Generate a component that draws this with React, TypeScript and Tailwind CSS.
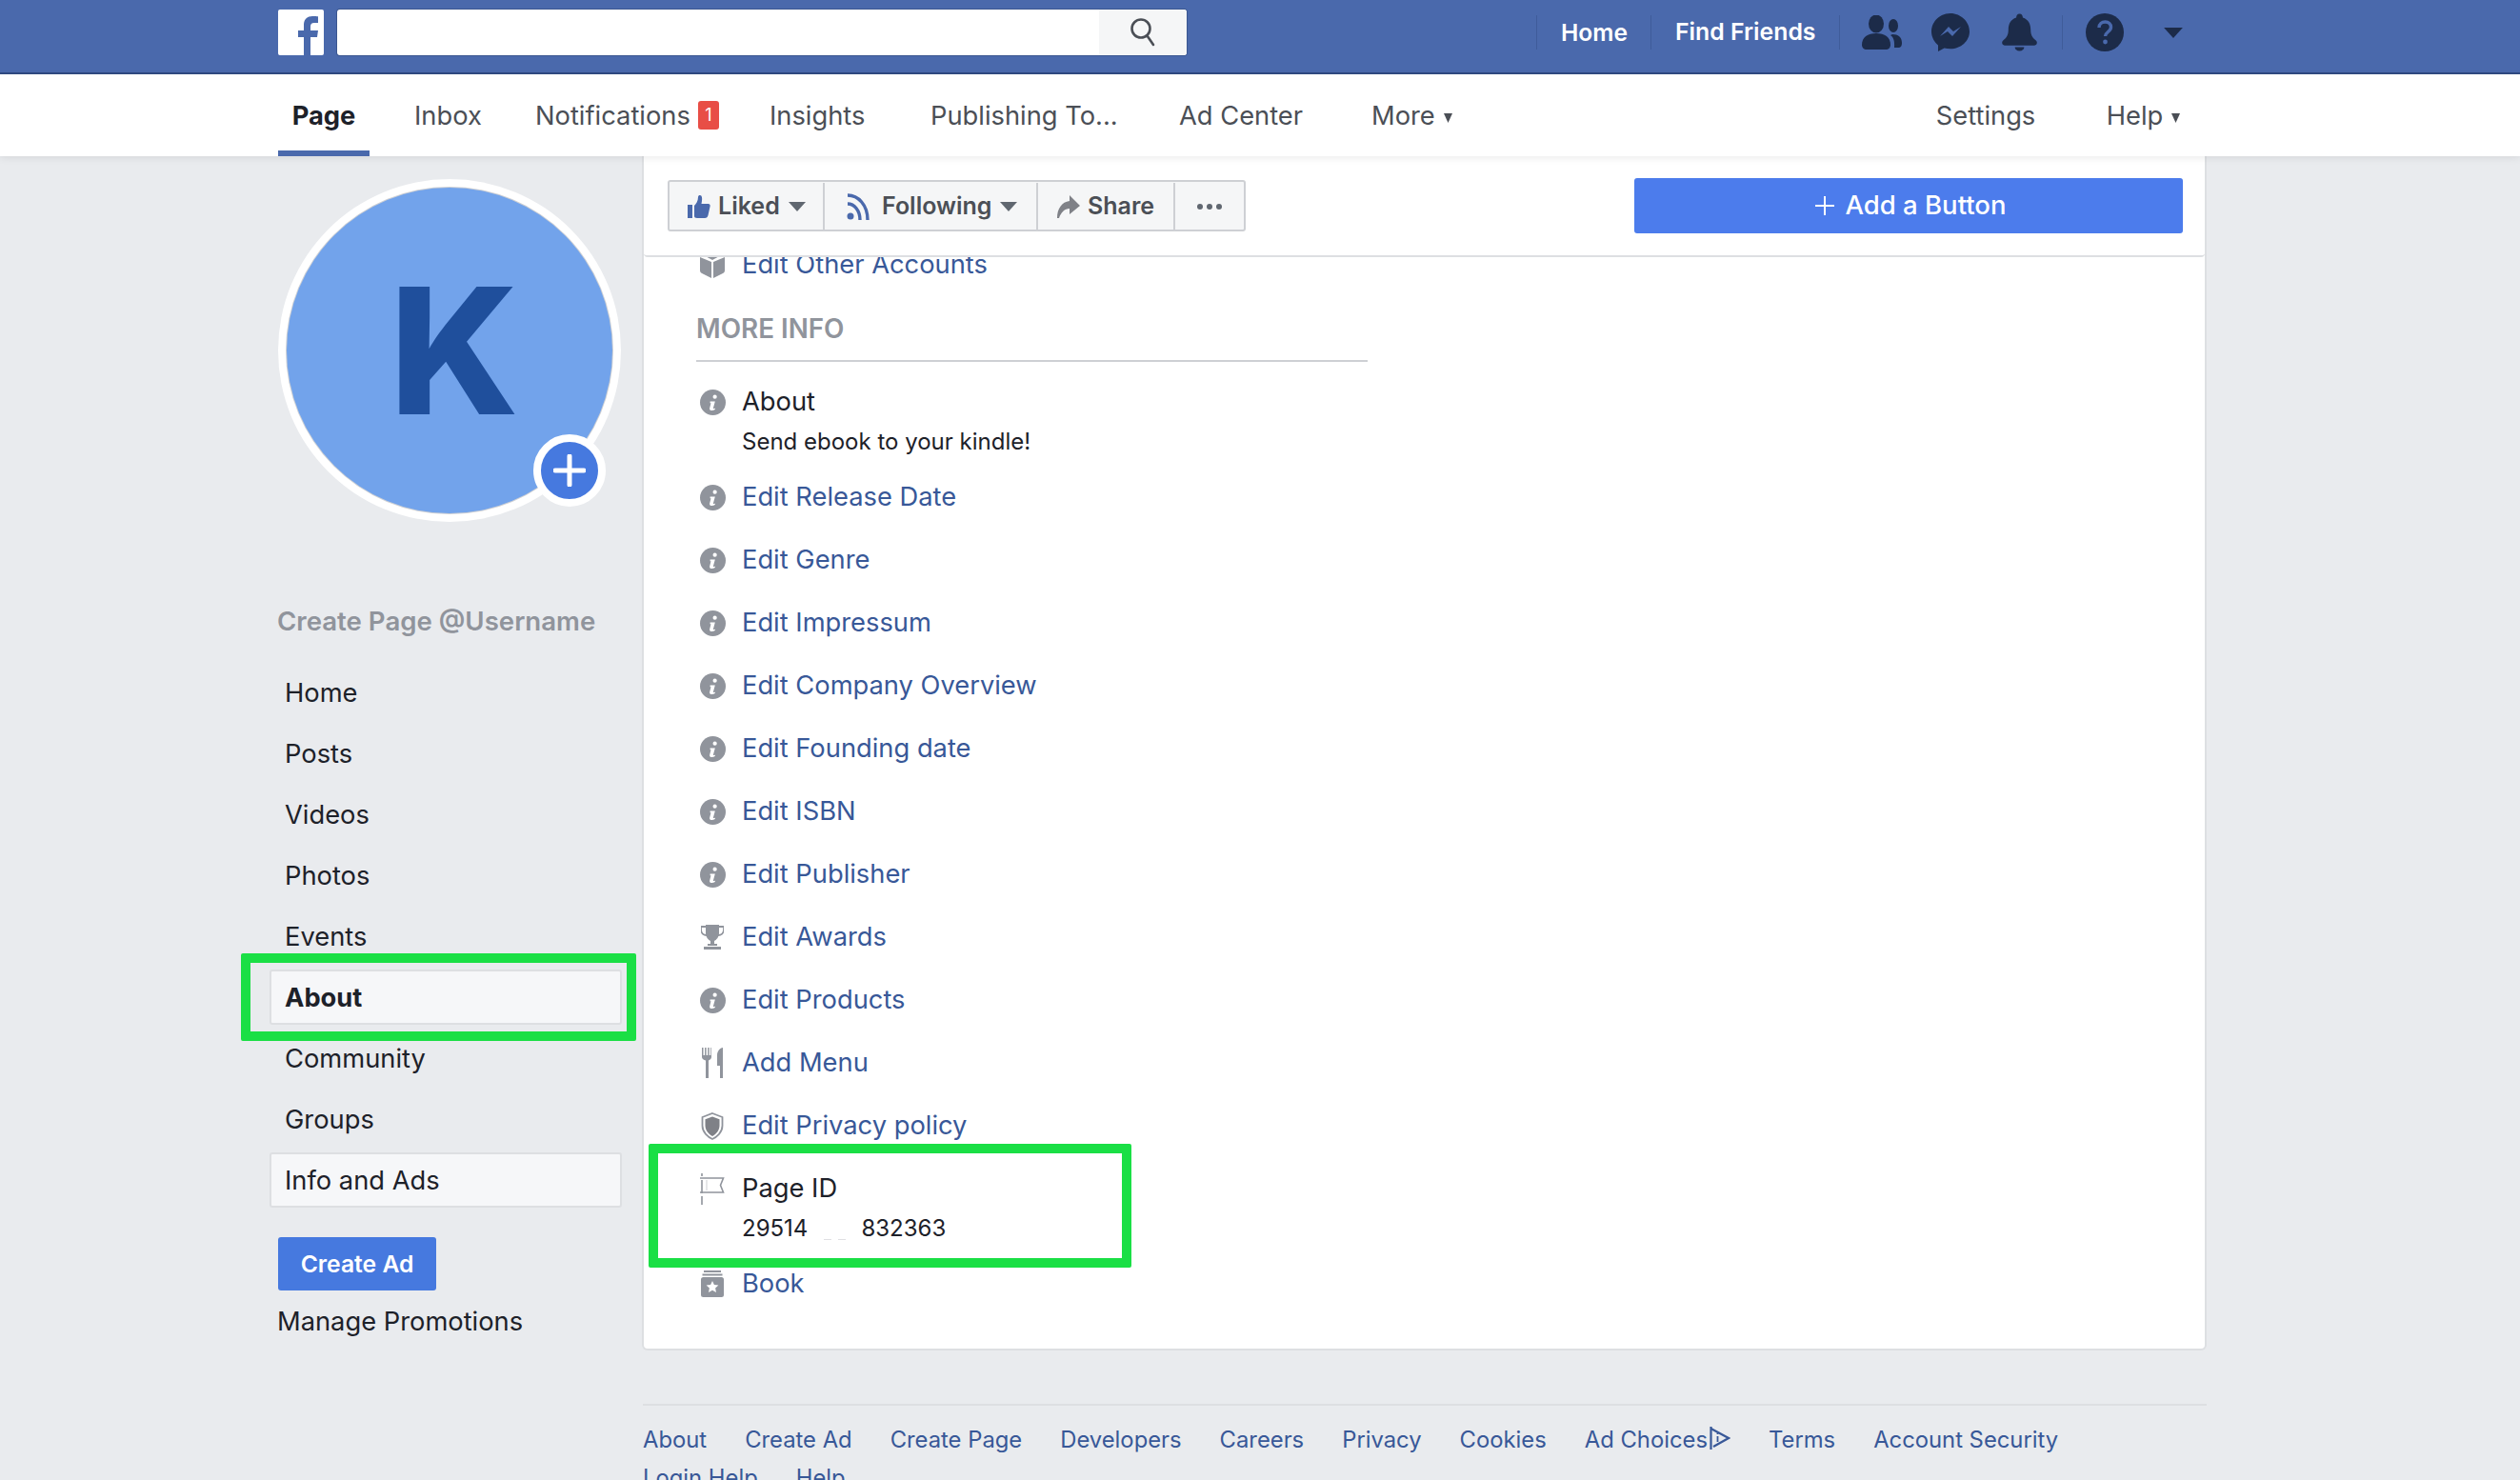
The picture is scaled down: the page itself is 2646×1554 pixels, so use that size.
import React from "react";

const sans = "font-['Inter','Liberation_Sans',sans-serif]";

const Caret = ({ className = "" }: { className?: string }) => (
  <svg viewBox="0 0 18 10" className={className}><path d="M0 0h18L9 10z" fill="currentColor" /></svg>
);
const SmallCaret = () => (
  <svg viewBox="0 0 9 10" className="ml-[9px] mt-[3px] h-[10px] w-[9px] text-[#4b4f56]"><path d="M0 0h9L4.500 10z" fill="currentColor" /></svg>
);

const Info = () => (
  <svg viewBox="0 0 28 28" className="w-[27px] h-[27px]">
    <circle cx="14" cy="14" r="14" fill="#90949c" />
    <circle cx="16.2" cy="8" r="2.2" fill="#fff" />
    <path d="M11 13h5.4l-2 7.2c-.2.8.7.9 2.2.1l-.3 1.6c-2.500 1.400-6.300 1.500-5.800-1.400l1.400-5.800H11z" fill="#fff" />
  </svg>
);
const Cube = () => (
  <svg viewBox="0 0 26 28" className="w-[26px] h-[28px]">
    <path d="M0 6l12 5v17L2 23c-1-.5-2-1.500-2-3z" fill="#90949c" />
    <path d="M26 6l-12 5v17l10-5c1-.5 2-1.500 2-3z" fill="#90949c" />
    <path d="M2 3L13 0l11 3-11 6z" fill="#90949c" />
  </svg>
);
const Trophy = () => (
  <svg viewBox="0 0 24 26" className="w-[24px] h-[26px]">
    <path d="M5 0h14v9c0 4-3 7-5 8v3h3v2H7v-2h3v-3c-2-1-5-4-5-8z" fill="#90949c" />
    <path d="M5 2H0v3c0 4 3 6 6 6M19 2h5v3c0 4-3 6-6 6" fill="none" stroke="#90949c" strokeWidth="1.800" />
    <rect x="3" y="23" width="18" height="3" fill="#90949c" />
  </svg>
);
const Menu = () => (
  <svg viewBox="0 0 22 32" className="w-[22px] h-[32px]">
    <path d="M0 0h1.500v8h1.600V0h1.500v8h1.600V0h1.500v8h1.600V0H10v10c0 2-2 3-3 3.500V32H4V13.500C2 13 0 12 0 10z" fill="#90949c" />
    <path d="M22 0v32h-3V19h-3V8c0-4 3-8 6-8z" fill="#90949c" />
  </svg>
);
const Shield = () => (
  <svg viewBox="0 0 24 29" className="w-[24px] h-[29px]">
    <path d="M12 1l10.500 4v9c0 7-6 12-10.500 14C7.500 26 1.500 21 1.500 14V5z" fill="#fff" stroke="#90949c" strokeWidth="1.800" />
    <path d="M12 4.500l7.500 2.800V14c0 5-4 9-7.500 11C8.500 23 4.500 19 4.500 14V7.300z" fill="#7f8187" />
  </svg>
);
const Flag = () => (
  <svg viewBox="0 0 26 33" className="w-[26px] h-[33px]">
    <path d="M2 0v3M2 7v14M2 24v9" stroke="#90949c" strokeWidth="1.600" fill="none" />
    <path d="M0 5h24.500l-3 7.500 3 7.500H0" stroke="#90949c" strokeWidth="1.600" fill="none" />
    <path d="M7 7v11" stroke="#d5d7da" strokeWidth="1.200" />
  </svg>
);
const Book = () => (
  <svg viewBox="0 0 24 28" className="w-[24px] h-[28px]">
    <rect x="3" y="0" width="18" height="2" fill="#90949c" />
    <rect x="1.500" y="3.500" width="21" height="2" fill="#90949c" />
    <rect x="0" y="7" width="24" height="21" rx="2.500" fill="#90949c" />
    <path d="M12 11l1.900 4.100 4.500.5-3.300 3 .9 4.400-4-2.200-4 2.200.9-4.400-3.300-3 4.500-.5z" fill="#fff" />
  </svg>
);

const Row = ({ icon, label }: { icon: React.ReactNode; label: string }) => (
  <div className="flex h-[66px] items-center pl-[55px]">
    <span className="flex w-[34px] justify-center mr-[14px]">{icon}</span>
    <span className="text-[#385898] text-[27.300px] leading-[34px]">{label}</span>
  </div>
);

const SideItem = ({ label, box, bold }: { label: string; box?: boolean; bold?: boolean }) => (
  <div className="flex h-16 items-center">
    <div className={`flex h-[58px] w-[370px] items-center rounded-[3px] pl-[14px] border-2 ${box ? "border-[#dddfe2] bg-[#f6f7f9]" : "border-transparent"}`}>
      <span className={`pt-[1px] text-[27.300px] leading-[34px] text-[#1d2129] ${bold ? "font-bold" : ""}`}>{label}</span>
    </div>
  </div>
);

export default function App() {
  const rows: [React.ReactNode, string][] = [
    [<Info />, "Edit Release Date"],
    [<Info />, "Edit Genre"],
    [<Info />, "Edit Impressum"],
    [<Info />, "Edit Company Overview"],
    [<Info />, "Edit Founding date"],
    [<Info />, "Edit ISBN"],
    [<Info />, "Edit Publisher"],
    [<Trophy />, "Edit Awards"],
    [<Info />, "Edit Products"],
    [<Menu />, "Add Menu"],
    [<Shield />, "Edit Privacy policy"],
  ];
  return (
    <div className={`relative h-[1554px] w-[2646px] overflow-hidden bg-[#e9ebee] ${sans}`}>
      {/* Top blue bar */}
      <header className="box-border flex h-[78px] items-start border-b-2 border-[#2f4a82] bg-[#4a69ac] pl-[292px] pt-[10px]">
        <div className="h-12 w-12 rounded-[2px] bg-white overflow-hidden">
          <svg viewBox="0 0 48 48" className="h-12 w-12">
            <path d="M27 48V29h-6v-7h6v-6c0-6 4-9 9-9 2 0 5 0 6 .3V14h-4c-3 0-4 1.500-4 4v4h8l-1 7h-7v19z" fill="#4a69ac" />
          </svg>
        </div>
        <div className="ml-[14px] flex h-12 w-[892px] overflow-hidden rounded-[3px] bg-white shadow-[0_0_0_1px_#3a5690]">
          <div className="flex-1" />
          <div className="flex w-[92px] items-center justify-center bg-[#f5f6f7]">
            <svg viewBox="0 0 32 32" className="-ml-[1px] h-8 w-8" fill="none" stroke="#4b4f56" strokeWidth="2.600">
              <circle cx="14" cy="12" r="9.500" />
              <path d="M20.500 19.500L27 29" strokeLinecap="round" />
            </svg>
          </div>
        </div>
        <div className="ml-[367px] mt-[6px] flex h-9 items-center">
          <div className="h-9 w-px bg-[#3f5c9a]" />
          <div className="box-border w-[119px] pl-[25px] text-[24.600px] font-semibold text-white">Home</div>
          <div className="h-9 w-px bg-[#3f5c9a]" />
          <div className="box-border w-[197px] pl-[25px] text-[24.800px] font-semibold text-white whitespace-nowrap">Find Friends</div>
          <div className="h-9 w-px bg-[#3f5c9a]" />
          <svg viewBox="0 0 42 36" className="ml-[23px] h-9 w-[42px]" fill="#1c2b49">
            <ellipse cx="15" cy="9" rx="8" ry="9.500" />
            <path d="M0 31c0-8 6-12 15-12s15 4 15 12c0 3-2 5-5 5H5c-3 0-5-2-5-5z" />
            <ellipse cx="33" cy="11" rx="5" ry="7" />
            <path d="M32 20c6 0 10 3 10 9 0 3-1 5-4 5h-4c.5-6-.5-11-4-13z" />
          </svg>
          <svg viewBox="0 0 40 40" className="ml-[31px] h-10 w-10">
            <path d="M20 0C9 0 0 8.500 0 19c0 6 3 11 7 14.500V40l6.500-3.500c2 .5 4.200.8 6.500.8 11 0 20-8.300 20-18.300S31 0 20 0z" fill="#1c2b49" />
            <path d="M9 24l9-10 5 5 8-5-9 10-5-5z" fill="#4a69ac" />
          </svg>
          <svg viewBox="0 0 38 40" className="ml-[34px] h-10 w-[37px]" fill="#1c2b49">
            <path d="M19 0c2.500 0 3.500 2 3.500 4 6 2 8.500 7 8.500 13 0 6 2 9 6 12 1.500 1.500 1 5-2 5H3c-3 0-3.500-3.500-2-5 4-3 6-6 6-12 0-6 2.500-11 8.500-13 0-2 1-4 3.500-4z" />
            <path d="M14 36h10c0 2.500-2 4-5 4s-5-1.500-5-4z" />
          </svg>
          <div className="ml-[26px] h-9 w-px bg-[#3f5c9a]" />
          <svg viewBox="0 0 40 40" className="ml-[24px] h-10 w-10">
            <circle cx="20" cy="20" r="20" fill="#1c2b49" />
            <path d="M14 15c0-4 3-6 6.500-6s6 2 6 5.500c0 5-6 5-6 9.500" fill="none" stroke="#4a69ac" strokeWidth="3.400" />
            <circle cx="20.500" cy="30" r="2.400" fill="#4a69ac" />
          </svg>
          <Caret className="ml-[42px] h-[11px] w-5 text-[#1c2b49]" />
        </div>
      </header>

      {/* Page navigation */}
      <nav className="relative z-20 flex h-[86px] bg-white pl-[292px] pt-[3px] text-[27.300px] text-[#4b4f56] shadow-[0_2px_8px_rgba(0,0,0,0.08)]">
        <div className="w-[143px]">
          <div className="-mt-[3px] flex h-[86px] w-24 items-center justify-center border-b-[6px] border-[#4a69ac] pt-[9px] font-bold text-[#1d2129]">Page</div>
        </div>
        <div className="flex w-[127px] items-center">Inbox</div>
        <div className="flex w-[246px] items-center">
          Notifications
          <span className="ml-[8px] flex h-[30px] w-[22px] -translate-y-[2px] items-center justify-center rounded-[3px] bg-[#e84e46] text-[18px] text-white">1</span>
        </div>
        <div className="flex w-[169px] items-center">Insights</div>
        <div className="flex w-[261px] items-center whitespace-nowrap">Publishing To...</div>
        <div className="flex w-[202px] items-center whitespace-nowrap">Ad Center</div>
        <div className="flex items-center">
          More
          <SmallCaret />
        </div>
        <div className="ml-[508px] flex w-[179px] items-center">Settings</div>
        <div className="flex items-center">
          Help
          <SmallCaret />
        </div>
      </nav>

      {/* Body */}
      <div className="flex pl-[292px]">
        {/* Sidebar */}
        <aside className="w-[382px] pt-6">
          <div className="relative box-border h-[360px] w-[360px] rounded-full bg-white p-[9px]">
            <div className="flex h-full w-full items-center justify-center rounded-full bg-[#72a3eb] shadow-[0_0_0_1px_#ced0d4]">
              <span className="ml-[10px] text-[184px] font-extrabold leading-none text-[#1f4f9c]">K</span>
            </div>
            <div className="absolute left-[268px] top-[268px] box-border flex h-[76px] w-[76px] items-center justify-center rounded-full border-8 border-white bg-[#4679df]">
              <svg viewBox="0 0 34 34" className="h-[34px] w-[34px]">
                <path d="M17 2v30M2 17h30" stroke="#fff" strokeWidth="5" strokeLinecap="round" />
              </svg>
            </div>
          </div>
          <div className="-ml-[1px] mt-[87px] text-[27.600px] font-semibold leading-[34px] text-[#90949c]">Create Page @Username</div>
          <div className="-ml-[9px] mt-[26px]">
            <SideItem label="Home" />
            <SideItem label="Posts" />
            <SideItem label="Videos" />
            <SideItem label="Photos" />
            <SideItem label="Events" />
            <SideItem label="About" box bold />
            <SideItem label="Community" />
            <SideItem label="Groups" />
            <SideItem label="Info and Ads" box />
          </div>
          <div className="mt-[28px] flex h-[56px] w-[166px] items-center justify-center rounded-[3px] bg-[#4679df] pt-[2px] text-[24.700px] font-semibold text-white">Create Ad</div>
          <div className="-ml-[1px] mt-[16px] text-[27.300px] leading-[34px] text-[#1d2129]">Manage Promotions</div>
        </aside>

        {/* Main column */}
        <main className="w-[1643px]">
          <section className="box-border h-[1254px] overflow-hidden rounded-b-[6px] border-x-2 border-b-2 border-[#dddfe2] bg-white">
            <div className="relative z-10 box-border flex h-[106px] items-start justify-between rounded-b-[4px] border-b-2 border-[#dddfe2] bg-white pl-[25px] pr-[23px] pt-[25px]">
              <div className="box-border flex h-[54px] w-[607px] rounded-[3px] border-2 border-[#ced0d4] bg-[#f5f6f7] pt-[1px] text-[25px] font-semibold text-[#4b4f56]">
                <div className="box-border flex w-[163px] items-center border-r-2 border-[#ced0d4] pl-[19px]">
                  <svg viewBox="0 0 24 24" className="h-6 w-6">
                    <path d="M0 10h5v14H0z" fill="#4a69ac" />
                    <path d="M7 11c2-2 4-5 4-9 0-1.500 1-2 2-2 2 0 2.500 3 2 6l-.5 3h7c2 0 2.500 1.500 2 3l-2 9c-.5 2-1.500 3-3.500 3H10c-2 0-3-1-3-2z" fill="#4a69ac" />
                  </svg>
                  <span className="ml-2">Liked</span>
                  <Caret className="ml-[9px] h-[10px] w-[18px] text-[#606770]" />
                </div>
                <div className="box-border flex w-[224px] items-center border-r-2 border-[#ced0d4] pl-[23px]">
                  <svg viewBox="0 0 24 28" className="h-[28px] w-6" fill="none" stroke="#4a69ac" strokeWidth="3.400">
                    <path d="M1 2c11 0 21 10 21 26" />
                    <path d="M1 11c7 0 13 7 13 17" />
                    <circle cx="4" cy="24" r="3.500" fill="#4a69ac" stroke="none" />
                  </svg>
                  <span className="ml-[13px]">Following</span>
                  <Caret className="ml-[8px] h-[10px] w-[18px] text-[#606770]" />
                </div>
                <div className="box-border flex w-[144px] items-center border-r-2 border-[#ced0d4] pl-[20px]">
                  <svg viewBox="0 0 24 24" className="h-6 w-6">
                    <path d="M13 0l11 11-11 9v-6C8 14 4 18 2 24H0C0 14 5 7 13 6z" fill="#7f8187" />
                  </svg>
                  <span className="ml-2">Share</span>
                </div>
                <div className="flex flex-1 items-center justify-center gap-[4px] pr-[1px]">
                  <span className="h-[6px] w-[6px] rounded-full bg-[#606770]" />
                  <span className="h-[6px] w-[6px] rounded-full bg-[#606770]" />
                  <span className="h-[6px] w-[6px] rounded-full bg-[#606770]" />
                </div>
              </div>
              <div className="-mt-[2px] flex h-[58px] w-[576px] items-center justify-center rounded-[3px] bg-[#4c7cec] pl-[5px] text-[27.500px] font-medium text-white">
                <svg viewBox="0 0 20 20" className="mr-[11px] h-5 w-5"><path d="M10 0v20M0 10h20" stroke="#fff" strokeWidth="2" /></svg>
                Add a Button
              </div>
            </div>

            <div className="-mt-[25px]">
              <Row icon={<Cube />} label="Edit Other Accounts" />
            </div>
            <div className="ml-[55px] box-border flex h-[69px] w-[705px] items-center border-b-2 border-[#ced0d4] text-[27.800px] font-semibold leading-[34px] text-[#90949c]">MORE INFO</div>

            <div className="box-border h-[109px] pl-[55px] pt-[25px]">
              <div className="flex h-[34px] items-center">
                <span className="mr-[14px] flex w-[34px] justify-center"><Info /></span>
                <span className="text-[27.300px] leading-[34px] text-[#1d2129]">About</span>
              </div>
              <div className="ml-[48px] mt-2 text-[24px] leading-[34px] text-[#1d2129]">Send ebook to your kindle!</div>
            </div>

            {rows.map(([icon, label]) => <Row key={label} icon={icon} label={label} />)}

            <div className="box-border h-[100px] pl-[55px] pt-4">
              <div className="flex h-[34px] items-center">
                <span className="mr-[14px] flex w-[34px] justify-center"><Flag /></span>
                <span className="text-[27.300px] leading-[34px] text-[#1d2129]">Page ID</span>
              </div>
              <div className="ml-[48px] mt-[8px] flex text-[24px] leading-[34px] text-[#1d2129]">
                <span>29514</span>
                <span className="flex w-[56px] items-end gap-[7px] pb-[5px] pl-[17px]">
                  <span className="h-px w-[8px] bg-[#dfe0e3]" />
                  <span className="h-px w-[8px] bg-[#dfe0e3]" />
                </span>
                <span>832363</span>
              </div>
            </div>

            <Row icon={<Book />} label="Book" />
          </section>

          <footer className="ml-[1px] mt-[56px] border-t-2 border-[#dddfe2] pt-[16px] text-[23.800px] leading-[40px] text-[#385898]">
            <div className="flex gap-x-[40px]">
              <span>About</span>
              <span>Create Ad</span>
              <span>Create Page</span>
              <span>Developers</span>
              <span>Careers</span>
              <span>Privacy</span>
              <span>Cookies</span>
              <span className="flex items-center">
                Ad Choices
                <svg viewBox="0 0 22 24" className="-mt-[4px] ml-[2px] h-6 w-[22px]" fill="none" stroke="#385898" strokeWidth="2.200">
                  <path d="M1.500 0v24" />
                  <path d="M1.500 2L20 12 4 21" />
                  <path d="M8.500 10v6M8.500 6.500v1.500" strokeWidth="1.800" />
                </svg>
              </span>
              <span>Terms</span>
              <span>Account Security</span>
            </div>
            <div className="flex gap-x-[40px]">
              <span>Login Help</span>
              <span>Help</span>
            </div>
          </footer>
        </main>
      </div>

      {/* Annotation rectangles drawn over the screenshot */}
      <div className="absolute left-[253px] top-[1001px] box-border h-[92px] w-[415px] rounded-[2px] border-[10px] border-[#1adf45]" />
      <div className="absolute left-[681px] top-[1201px] box-border h-[130px] w-[507px] rounded-[2px] border-[10px] border-[#1adf45]" />
    </div>
  );
}
